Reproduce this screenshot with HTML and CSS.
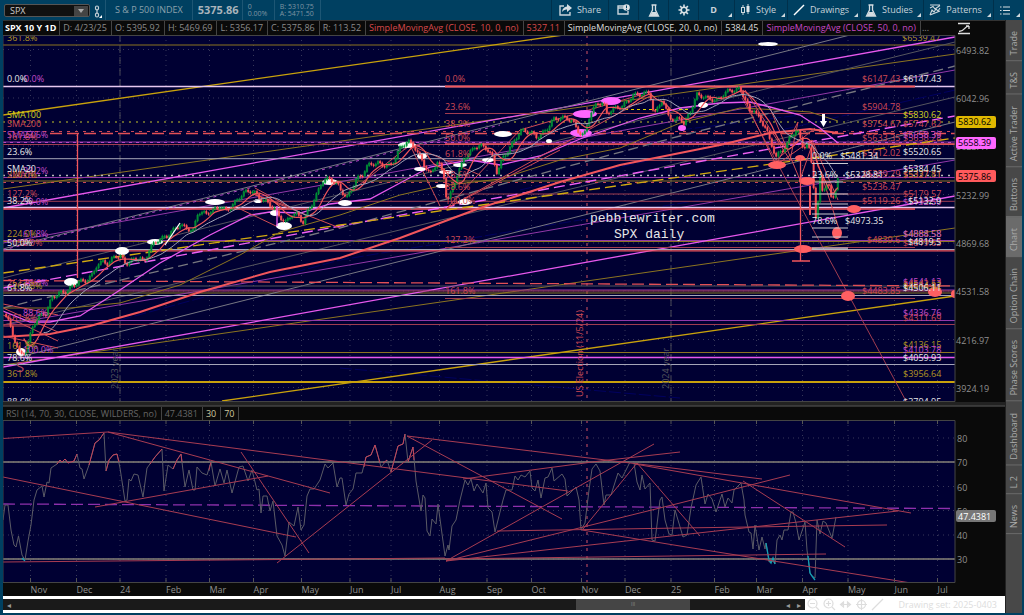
FILE: index.html
```html
<!DOCTYPE html>
<html lang="en">
<head>
<meta charset="utf-8">
<title>SPX daily chart</title>
<link rel="stylesheet" href="styles.css">
</head>
<body>
<div class="app">
  <header class="toolbar">
    <div class="symbol">
      <input class="symbol-input" type="text" value="SPX" aria-label="Symbol">
      <button class="symbol-drop" aria-label="Recent symbols"><svg width="6" height="4" viewBox="0 0 6 4"><path d="M0 0H6L3 4Z" fill="#aaa"/></svg></button>
    </div>
    <button class="link-btn" aria-label="Link symbol"><svg width="9" height="14" viewBox="0 0 9 14"><g fill="none" stroke="#c3ced6" stroke-width="1.2"><rect x="1.5" y="1" width="3" height="4" rx="1.5"/><rect x="1.5" y="8" width="3" height="4" rx="1.5"/><path d="M3 4V9"/></g><path d="M8 10V13H5Z" fill="#fff"/></svg></button>
    <div class="quote name">S &amp; P 500 INDEX</div>
    <div class="quote last">5375.86</div>
    <div class="quote pair"><span>0</span><span>0.00%</span></div>
    <div class="quote pair ba"><span>B: 5310.75</span><span>A: 5471.50</span></div>
    <nav class="tools">
      <button><svg width="13" height="12" viewBox="0 0 13 12"><path d="M5 2H1V11H11V8" fill="none" stroke="#c9d3da" stroke-width="1.4"/><path d="M8 0L13 4L8 8V5.500Q5 5 3 8Q3.500 3 8 2.500Z" fill="#d5dde2"/></svg>Share</button>
      <button aria-label="Alerts"><svg width="13" height="12" viewBox="0 0 13 12"><path d="M7 2H1V10H11V7M1 4H7" fill="none" stroke="#c9d3da" stroke-width="1.4"/><circle cx="9.500" cy="3.500" r="3.300" fill="#dbe2e6"/><path d="M9.500 1.500V4M9.500 4.800V5.800" stroke="#004061"/></svg></button>
      <button aria-label="Studies menu"><svg width="12" height="13" viewBox="0 0 12 13"><path d="M3.500 1H8.500M4.500 1V6L1.500 12H10.500L7.500 6V1" fill="none" stroke="#d5dde2" stroke-width="1.300"/><path d="M4 8H8L10 12H2Z" fill="#d5dde2"/></svg></button>
      <button aria-label="Settings"><svg width="12" height="12" viewBox="0 0 12 12"><circle cx="6" cy="6" r="2.800" fill="none" stroke="#dbe2e6" stroke-width="1.600"/><path d="M6 .5V3M6 9V11.500M.5 6H3M9 6H11.500M2.100 2.100L3.800 3.800M8.200 8.200L9.900 9.900M9.900 2.100L8.200 3.800M3.800 8.200L2.100 9.900" stroke="#dbe2e6" stroke-width="1.600"/></svg></button>
      <button class="more"><b>D</b></button>
      <button class="more"><svg width="11" height="12" viewBox="0 0 11 12"><path d="M3 1V11M8 0V10" stroke="#cfd8dd"/><rect x="1.500" y="3.500" width="3" height="5" fill="#004061" stroke="#cfd8dd"/><rect x="6.500" y="2" width="3" height="6" fill="#dfe5e9"/></svg>Style</button>
      <button class="more"><svg width="12" height="12" viewBox="0 0 12 12"><path d="M1 11L11 1" stroke="#fff" stroke-width="1.500"/></svg>Drawings</button>
      <button class="more"><svg width="12" height="13" viewBox="0 0 12 13"><path d="M3.500 1H8.500M4.500 1V6L1.500 12H10.500L7.500 6V1" fill="none" stroke="#d5dde2" stroke-width="1.300"/><path d="M4 8H8L10 12H2Z" fill="#d5dde2"/></svg>Studies</button>
      <button class="more"><svg width="12" height="12" viewBox="0 0 12 12"><path d="M1 1H11M1 4L4 2.500L6 5L11 1.500M1 11L3 6L5 8L7 5L9 7L11 4M1 11L11 7" fill="none" stroke="#cfd8dd" stroke-width="1.100"/></svg>Patterns</button>
      <button class="more" aria-label="Menu"><svg width="10" height="9" viewBox="0 0 10 9"><path d="M0 1H1.500M3 1H10M0 4.500H1.500M3 4.500H10M0 8H1.500M3 8H10" stroke="#d5dde2" stroke-width="1.200"/></svg></button>
    </nav>
  </header>
  <div class="body">
    <main class="charts">
      <div class="legend">
        <span class="head">SPX 10 Y 1D</span><span>D: 4/23/25</span><span>O: 5395.92</span><span>H: 5469.69</span><span>L: 5356.17</span><span>C: 5375.86</span><span>R: 113.52</span><span class="red-text">SimpleMovingAvg (CLOSE, 10, 0, no)</span><span class="red-text">5327.11</span><span class="white-text">SimpleMovingAvg (CLOSE, 20, 0, no)</span><span class="white-text">5384.45</span><span class="mag-text">SimpleMovingAvg (CLOSE, 50, 0, no)</span><span class="rest">...</span>
        <button class="scale" aria-label="Auto scale"><svg width="14" height="13" viewBox="0 0 14 13"><path d="M1 1.500H13M1 11.500H13M2 9.500C8 9.500 7 4 12 4M12 4H9M12 4V7" fill="none" stroke="#ddd" stroke-width="1.300"/></svg></button>
      </div>
      <svg class="plot" viewBox="3 35 1002 367" role="img" aria-label="SPX daily price chart">
        <defs><clipPath id="area"><rect x="3" y="35" width="952" height="366"/></clipPath></defs>
        <rect x="3" y="35" width="952" height="366" class="navy"/>
        <g clip-path="url(#area)">
          <g id="grid"></g>
          <path class="year" d="M120 35V401M671 35V401"/>
          <path class="elect" d="M587 35V401"/>
          <g fill="none">
            <path class="blueline" d="M120 320L340 260L700 200M340 368L680 398M520 190L955 90M680 130L800 115"/>
            <path class="golddim" d="M3 45H955M3 181H955M3 241.500H955M3 293H955M3 352.500H955M3 189L955 54M3 365L955 228"/>
            <path class="gold" d="M3 115L563 35M222 401L955 296"/>
            <path class="gold thick" d="M3 382H955"/>
            <path class="olive-dot" d="M3 122H955"/>
            <path class="violet" d="M3 142H955M3 177.500H955M3 290H955M3 320.500H955M3 243L955 70M3 325L955 160M3 240.500H955"/>
            <path class="magenta" d="M3 357.500H955M3 208L955 37M3 367L955 196"/>
            <path class="grey" d="M3 249L850 35M15 358L640 201L955 122"/>
            <path class="greydim" d="M3 278L955 42M3 325L955 97M3 286H955"/>
            <path class="reddim" d="M3 144.500H955M3 201.300H955M3 291H955M3 324.500H955M445 113.500H915M445 160.500H915M445 194H915M445 247.500H915M445 298.500H915M742 98L906 401"/>
            <path class="white" d="M3 158.700H955M3 364.500H955M3 249.500H955M3 295.500H955"/>
            <path class="pinkwhite" d="M3 86.500H955M3 207.500H955"/>
            <path class="red" d="M3 209H915M3 250.800H955M445 144H955M77.500 133V278"/>
            <path class="red thick" d="M445 86.500H915"/>
            <path class="reddash" d="M3 131.500H955M3 182.500H955"/>
            <path class="redlong" d="M50 133.500H955M3 280.500L955 286"/>
            <path class="magdot" d="M3 142.500H955M3 250L500 125"/>
            <path class="whitedot" d="M3 175.500H955"/>
            <path class="yeldot" d="M625 109.500H690"/>
            <path class="greylong" d="M3 308L340 228L680 136L955 66"/>
            <path class="maglong" d="M3 288L340 226L680 165L955 116"/>
            <path class="goldlong" d="M3 273L340 225L680 177L955 138"/>
            <path class="golddim" d="M3 308L70 308L120 303L180 285L240 255L280 232L340 215L400 195L440 186L500 179L560 160L620 148L680 123L740 108L780 110L810 112L838 121"/>
            <path class="red sma" d="M3 337L50 334L90 326L140 312L200 292L270 272L340 258L400 238L480 208L560 182L620 165L680 153L720 145L770 133L810 129L838 133"/>
            <path class="magenta wide" d="M3 311L30 322L50 322L80 316L120 290L160 263L210 235L250 215L270 212L300 213L330 204L370 199L400 183L430 167L470 160L500 165L540 156L580 139L640 118L680 108L720 103L750 102L770 107L800 115L820 128L838 143"/>
            <path class="reddim strong" d="M3 304L58 315M3 308L58 332M3 315L58 341M3 326H30M3 336L58 348M447 208L520 130L640 95M447 208L650 96M447 208L560 150M340 200L410 145L440 206M410 145L480 175M255 188L290 207L253 194L340 228M238 208L276 226M740 90L776 165L812 140L838 200M770 108L800 180L812 145L840 232M745 90L790 160L798 122L776 165M776 160L815 128"/>
          </g>
          <g fill="#fff">
            <ellipse cx="768" cy="44" rx="10" ry="2"/><ellipse cx="703" cy="105" rx="5" ry="3"/><ellipse cx="407" cy="145" rx="9" ry="3"/><ellipse cx="422" cy="156" rx="5" ry="3"/><ellipse cx="420" cy="169" rx="6" ry="2"/><ellipse cx="446" cy="172" rx="7" ry="2"/><ellipse cx="442" cy="186" rx="6" ry="2"/><ellipse cx="460" cy="165" rx="7" ry="2"/><ellipse cx="465" cy="202" rx="7" ry="3"/><ellipse cx="488" cy="160" rx="6" ry="2"/><ellipse cx="503" cy="134" rx="9" ry="3"/><ellipse cx="549" cy="141" rx="3" ry="2"/><ellipse cx="215" cy="202" rx="10" ry="3"/><ellipse cx="258" cy="201" rx="4" ry="2"/><ellipse cx="275" cy="213" rx="5" ry="3"/><ellipse cx="284" cy="226" rx="8" ry="4"/><ellipse cx="330" cy="182" rx="8" ry="3"/><ellipse cx="345" cy="203" rx="7" ry="3"/><ellipse cx="155" cy="242" rx="8" ry="3"/><ellipse cx="122" cy="251" rx="7" ry="4"/><ellipse cx="71" cy="282" rx="7" ry="4"/><ellipse cx="21" cy="352" rx="5" ry="4"/>
          </g>
          <g fill="#ff66ff"><ellipse cx="611" cy="101" rx="10" ry="4"/><ellipse cx="585" cy="114" rx="12" ry="4"/><ellipse cx="581" cy="133" rx="11" ry="4"/><ellipse cx="682" cy="128" rx="4" ry="3"/></g>
          <g id="candles"></g>
          <path class="candleline" d="M165 245L180 223"/>
          <path class="magenta wide" d="M277 206V226"/>
          <g fill="#ff5f62"><ellipse cx="777" cy="165" rx="9" ry="4"/><ellipse cx="807" cy="181" rx="8" ry="4"/><ellipse cx="800" cy="158" rx="5" ry="3"/><ellipse cx="854" cy="209" rx="7" ry="4"/><ellipse cx="837" cy="233" rx="5" ry="6"/><ellipse cx="803" cy="249" rx="9" ry="4"/><ellipse cx="848" cy="296" rx="7" ry="5"/><ellipse cx="935" cy="292" rx="7" ry="5"/><ellipse cx="955" cy="294" rx="4" ry="4"/></g>
          <path class="red" d="M800.500 157V261M792 261H810"/>
          <path class="red thick" d="M810 186V215"/>
          <path class="fib" d="M812 163.500H848M815 182H843M812 194H848M812 204H848M812 214H848M812 228H848M812 237H848M812 248H848M812 249H848"/>
          <path d="M822 114H825V121H827L823.500 127L820 121H822Z" fill="#fff"/>
          <g id="labels"></g>
          <text x="590" y="222" class="mono">pebblewriter.com</text>
          <text x="614" y="238" class="mono">SPX daily</text>
          <text class="lbl c-r" transform="translate(583 397) rotate(-90)">US Election (11/5/24)</text>
          <text class="lbl c-d" transform="translate(118 389) rotate(-90)">2023 year</text>
          <text class="lbl c-d" transform="translate(669 389) rotate(-90)">2024 year</text>
          <text x="16" y="372" class="scribble">S</text>
        </g>
        <path class="frame" d="M3 35.500H955V401.500H3Z"/>
        <g class="axis" id="price-axis"></g>
        <g class="tag"><rect x="956" y="116" width="40" height="12" rx="2" fill="#e0b800"/><text x="958" y="125">5830.62</text><rect x="956" y="137" width="40" height="12" rx="2" fill="#ff66ff"/><text x="958" y="146">5658.39</text><rect x="956" y="170" width="40" height="12" rx="2" fill="#ff5a5c"/><text x="958" y="180">5375.86</text></g>
      </svg>
      <div class="splitter"></div>
      <div class="legend rsi"><span>RSI (14, 70, 30, CLOSE, WILDERS, no)</span><span>47.4381</span><span class="cream">30</span><span class="cream">70</span></div>
      <svg class="plot" viewBox="3 420 1002 176" role="img" aria-label="RSI chart">
        <defs><clipPath id="rsi-area"><rect x="3" y="420" width="952" height="162"/></clipPath></defs>
        <rect x="3" y="420" width="952" height="162" class="navy"/>
        <g clip-path="url(#rsi-area)" fill="none">
          <g id="rsi-grid"></g>
          <path class="elect" d="M587 420V582"/>
          <path class="bound" d="M3 462H955M3 559H955"/>
          <path class="violetlong" d="M3 504L955 508.500"/>
          <path class="rsi-line" d="M3 520L5 505L8 505L11 530L14 545L16 547L18.500 536L22 555L25 560L28 541L31 525L34 500L37 490L42 486L44 497L47 482L49 483L51 468L57 464L60 460L62 462L65 459L68 463L74 461L77 454L80 468L82 469L84 479L89 465L95 443L99 440L104 433L106 471L109 460L113 455L117 454L120 468L125 501L127 500L129 479L131 481L134 474L138 475L143 497L147 468L155 457L162 449L164 491L168 465L173 469L177 460L181 454L185 487L189 470L193 490L195 490L197 467L202 473L207 475L211 462L215 486L220 469L224 483L227 470L232 493L239 467L243 466L248 481L252 470L257 490L259 489L261 513L263 496L267 496L270 511L273 501L277 536L282 545L285 556L289 522L294 526L298 507L301 530L304 525L307 496L310 489L314 489L320 480L325 464L328 468L333 463L337 487L340 478L342 478L346 505L349 494L353 489L356 473L362 473L366 457L371 455L375 445L381 467L387 460L391 472L398 446L403 444L405 434L408 462L413 447L416 481L421 511L423 495L425 498L427 531L430 536L432 519L436 524L438 504L445 556L448 545L449 550L452 526L456 520L460 500L465 480L468 485L471 479L474 491L477 484L483 493L486 483L488 508L492 512L495 532L503 500L506 490L512 490L515 476L518 480L521 475L525 477L530 471L532 488L535 491L538 480L541 498L545 478L548 477L552 468L554 481L562 474L565 479L567 496L576 487L579 500L581 530L585 523L589 490L592 469L596 464L600 471L604 505L606 495L611 495L618 473L622 478L630 462L634 463L637 482L640 490L642 475L645 489L650 483L652 540L655 541L660 500L662 497L665 520L669 534L672 535L675 510L678 520L683 537L687 535L691 508L696 485L701 477L705 504L708 494L712 499L716 512L722 494L725 507L728 498L732 503L734 490L741 483L744 500L745 515L749 532L751 533L753 549L755 525L759 550L762 537L765 549L766 543L769 562L773 561L775 564L777 540L780 535L782 540L784 530L788 530L791 512L793 512L796 523L799 540L805 522L807 550L810 573L812 576L815 578L817 520L820 534L823 521L826 523L832 538L836 517"/>
          <path class="over" d="M57 464L60 460L62 462L65 459L68 463L74 461L77 454M89 465L95 443L99 440L104 433M106 471L109 460L113 455L117 454L119 462M150 464L155 457L162 449M173 469L177 460L181 454L182 462M211 462L209 470M364 467L366 457L371 455L375 445L380 463M383 463L387 460M391 472L398 446L403 444L405 434M408 462L413 447L414 460"/>
          <path class="under" d="M766 543L769 560L771 563L773 558L775 564M808 556L810 573L812 576L815 580M22 558L25 561"/>
          <path class="trend" d="M3 438.500L108 432L568 491M108 432L330 493M3 477L296 537M95 507L268 476M241 452L309 553M277 563L432 440M3 562L445 558L446 559L826 554M407 436L562 519M407 436L680 469L762 479M635 464L911 513M463 479L600 461L680 452M446 561L654 444M446 561L680 503L790 475M446 561L680 535L898 511M497 531L680 528L887 525M582 530L680 546L911 583M583 529L637 463L700 536M743 481L845 547"/>
        </g>
        <path class="frame" d="M3 420.500H955V582.500H3Z"/>
        <g class="axis" id="rsi-axis"></g>
        <g class="tag"><rect x="956" y="510" width="40" height="12" rx="2" fill="#777"/><text x="958" y="520" fill="#fff">47.4381</text></g>
      </svg>
      <footer class="status">
        <div class="track"><button class="arrow" aria-label="Scroll to start">◂</button><div class="thumb">III</div><button class="arrow" aria-label="Scroll left">◂</button><button class="arrow" aria-label="Scroll right">▸</button></div>
        <div class="zoomers">
          <button aria-label="Zoom out"><svg width="13" height="13" viewBox="0 0 13 13"><circle cx="5.500" cy="5.500" r="4.500"/><path d="M3 5.500H8M9 9L12 12"/></svg></button>
          <button aria-label="Zoom in"><svg width="13" height="13" viewBox="0 0 13 13"><circle cx="5.500" cy="5.500" r="4.500"/><path d="M3 5.500H8M5.500 3V8M9 9L12 12"/></svg></button>
          <button aria-label="Pan"><svg width="13" height="13" viewBox="0 0 13 13"><path d="M2 6.500H11M4.500 4L1.500 6.500L4.500 9ZM8.500 4L11.500 6.500L8.500 9Z"/></svg></button>
          <button aria-label="Crosshair"><svg width="13" height="13" viewBox="0 0 13 13"><circle cx="6.500" cy="6.500" r="4"/><path d="M6.500 1V12M1 6.500H12"/></svg></button>
          <button aria-label="Draw line"><svg width="13" height="13" viewBox="0 0 13 13"><path d="M1 12L12 1"/></svg></button>
        </div>
        <button class="set">Drawing set: 2025-0403</button>
      </footer>
    </main>
    <aside class="tabs">
      <button>Trade</button><button>T&amp;S</button><button>Active Trader</button><button>Buttons</button><button class="on">Chart</button><button>Option Chain</button><button>Phase Scores</button><button>Dashboard</button><button>L 2</button><button>News</button>
    </aside>
  </div>
</div>
<script src="chart.js"></script>
</body>
</html>
```
FILE: styles.css
```css
* { box-sizing: border-box; }
body {
  margin: 0;
  background: #004061;
  font-family: "Open Sans", "Noto Sans", sans-serif;
  font-size: 9px;
  line-height: 12px;
  color: #8a8a8a;
}
button, input { font: inherit; color: inherit; border: 0; background: none; padding: 0; margin: 0; }
svg { display: block; }
.app { min-height: 100vh; padding: 0 2px 2px 3px; display: flex; flex-direction: column; }

.toolbar { display: flex; align-items: stretch; height: 20px; color: #9fb0bb; white-space: nowrap; }
.symbol { display: flex; align-items: center; width: 86px; margin: 4px 0 3px 1px; background: #101010; border: 1px solid #555; border-radius: 2px; }
.symbol-input { flex: 1; min-width: 0; padding-left: 5px; color: #ccc; }
.symbol-drop { display: grid; place-items: center; width: 14px; height: 10px; background: #444; margin-right: 1px; }
.link-btn { width: 15px; padding: 3px 0 0 4px; }
.quote { display: flex; align-items: center; border-left: 1px solid #1d5674; padding-left: 5px; }
.name { padding: 0 9px; color: #8ca0ac; }
.last { font-size: 11px; font-weight: 700; width: 50px; color: #a9b4bb; }
.pair { flex-direction: column; align-items: flex-start; justify-content: center; width: 32px; font-size: 7px; line-height: 7px; color: #7f95a2; }
.ba { width: 47px; border-right: 1px solid #1d5674; }
.tools { display: grid; grid-template-columns: 57px 30px 30px 30px 36px 53px 73px 63px 70px 29px; margin-left: auto; color: #c9d3da; }
.tools button { position: relative; display: flex; align-items: center; justify-content: center; gap: 5px; border-left: 1px solid #00304b; }
.tools .more { padding-right: 6px; }
.more::after { content: ""; position: absolute; right: 2px; bottom: 3px; border: solid transparent; border-width: 4px 0 0 4px; border-right: 0; border-bottom: 4px solid #cfd8dd; border-top: 0; }

.body { display: flex; flex: 1; }
.charts { flex: 1; min-width: 0; background: #0a0a0a; display: flex; flex-direction: column; }
.legend { display: flex; align-items: center; height: 15px; white-space: nowrap; border-top: 1px solid #333; }
.legend span { padding: 0 4px 0 3px; border-right: 1px solid #444; line-height: 14px; }
.legend .head { color: #fff; font-weight: 700; padding-left: 2px; padding-right: 3px; }
.red-text { color: #d8494b; }
.white-text { color: #ddd; }
.mag-text { color: #c648c6; }
.cream { color: #cfc9a0; }
.legend .rest { border: 0; padding: 0 1px; }
.scale { margin: 0 34px 0 auto; }
.splitter { height: 4px; background: #222; border-bottom: 1px solid #3a3a3a; }
.rsi { height: 14px; color: #666; }
.plot { width: 100%; height: auto; }

.navy { fill: #000033; }
.frame { fill: none; stroke: #444; }
.grid-line { stroke: #50506a; stroke-dasharray: 1 4; fill: none; opacity: .7; }
.year { stroke: #4a4a58; stroke-dasharray: 7 4; }
.elect { stroke: #a0405a; stroke-dasharray: 3 5; stroke-width: 1.3; }
.blueline { stroke: #000060; stroke-dasharray: 12 3; }
.golddim { stroke: #8c7420; }
.gold { stroke: #c9a20c; stroke-width: 1.3; }
.thick { stroke-width: 2; }
.wide { stroke-width: 1.6; }
.olive-dot { stroke: #82822e; stroke-width: 1.5; stroke-dasharray: 2 5; }
.violet { stroke: #9238a8; }
.magenta { stroke: #e858ee; stroke-width: 1.3; }
.grey { stroke: #777783; }
.greydim { stroke: #55555f; }
.reddim { stroke: #a03c50; }
.strong { stroke: #d04c54; }
.white { stroke: #a5a5b8; }
.pinkwhite { stroke: #e6c8f0; stroke-width: 1.6; }
.red { stroke: #f2565c; fill: none; stroke-width: 1.3; }
.red.thick { stroke-width: 2; }
.red.sma { stroke-width: 2; }
.reddash { stroke: #c84858; stroke-dasharray: 3 5; }
.redlong { stroke: #e24f55; stroke-width: 1.3; stroke-dasharray: 12 5; }
.magdot { stroke: #b648c6; stroke-dasharray: 3 4; }
.whitedot { stroke: #b8b8b8; stroke-dasharray: 2 5; stroke-width: 1.3; }
.yeldot { stroke: #e0d000; stroke-dasharray: 3 3; }
.greylong { stroke: #77777f; stroke-dasharray: 10 5; stroke-width: 1.3; }
.maglong { stroke: #f060f4; stroke-dasharray: 11 5; stroke-width: 1.4; }
.goldlong { stroke: #d2aa10; stroke-dasharray: 11 5; stroke-width: 1.4; }
.candleline { stroke: #fff; stroke-width: 1.3; }
.fib { stroke: #c8c8d0; stroke-width: 1; fill: none; }
.up { stroke: #00a838; fill: #001a30; }
.down { stroke: #ff5558; fill: #ff5558; }
.sma10 { stroke: #f0565a; stroke-width: 1.2; fill: none; }
.sma20 { stroke: #a4a4b8; fill: none; }
.lbl { font-size: 9px; }
.mono { font-family: "Liberation Mono", monospace; font-size: 13px; fill: #e8e8e8; }
.scribble { font-size: 15px; fill: #b84a60; }
.c-w { fill: #e8e8e8; }
.c-m { fill: #c44ccc; }
.c-r { fill: #d04a54; }
.c-g { fill: #b39522; }
.c-y { fill: #d2d21e; }
.c-d { fill: #55555c; }
.axis text { font-size: 9px; fill: #909090; }
.axis path { stroke: #555; }
.tag text { font-size: 9px; }
.bound { stroke: #858178; stroke-width: 1.3; }
.violetlong { stroke: #8e30ac; stroke-width: 1.3; stroke-dasharray: 12 5; }
.rsi-line { stroke: #5b5b66; }
.over { stroke: #c2445a; }
.under { stroke: #12a0b4; stroke-width: 1.3; }
.trend { stroke: #a83c52; }

.status { display: flex; align-items: center; flex: 1; min-height: 17px; background: #fff; color: #ddd; }
.track { display: flex; align-items: center; flex: 0 0 80%; height: 11px; background: #1a1a1a; }
.arrow { width: 11px; font-size: 8px; line-height: 10px; color: #999; }
.thumb { width: 114px; height: 11px; margin: 0 auto 0 calc(72% - 15px); background: #454545; color: #888; font-size: 5px; line-height: 11px; text-align: center; }
.zoomers { display: flex; gap: 3px; padding-left: 2px; }
.zoomers svg { fill: none; stroke: #ddd; stroke-width: 1.2; }
.set { margin-left: auto; margin-right: 8px; }

.tabs { width: 17px; background: #484848; border-left: 1px solid #222; display: flex; flex-direction: column; }
.tabs button { writing-mode: vertical-rl; transform: rotate(180deg); padding: 5px 0 11px; color: #aaa; border-top: 1px solid #6a6a6a; line-height: 16px; white-space: nowrap; }
.tabs .on { background: #6b6b6b; }
```
FILE: chart.js
```js
const NS = "http://www.w3.org/2000/svg";
function add(parent, tag, attrs, text) {
  const el = document.createElementNS(NS, tag);
  for (const key in attrs) el.setAttribute(key, attrs[key]);
  if (text) el.textContent = text;
  document.getElementById(parent).appendChild(el);
}

const months = [["Nov", 30.5], ["Dec", 76.5], ["24", 120], ["Feb", 166], ["Mar", 209.5], ["Apr", 253.5], ["May", 301.5], ["Jun", 350], ["Jul", 391], ["Aug", 439.5], ["Sep", 487], ["Oct", 531.5], ["Nov", 581.5], ["Dec", 625], ["25", 671], ["Feb", 714.5], ["Mar", 756.5], ["Apr", 802.5], ["May", 848], ["Jun", 894.5], ["Jul", 937.5]];
const prices = [["6493.82", 49.5], ["6042.96", 98], ["5623.41", 146], ["5232.99", 194.5], ["4869.68", 243], ["4531.58", 291], ["4216.97", 339.5], ["3924.19", 387.5]];
const levels = [["80", 438], ["70", 462], ["60", 486.5], ["50", 510.5], ["40", 535], ["30", 559]];

for (const [name, x] of months) {
  add("grid", "path", { class: "grid-line", d: `M${x} 35V401` });
  add("rsi-grid", "path", { class: "grid-line", d: `M${x} 420V582` });
  add("rsi-axis", "path", { d: `M${x} 420V424M${x} 578V582` });
  add("rsi-axis", "text", { x, y: 593 }, name);
}
for (const [name, y] of prices) {
  add("grid", "path", { class: "grid-line", d: `M3 ${y}H955` });
  add("price-axis", "text", { x: 956, y: y + 4 }, name);
}
for (const [name, y] of levels) {
  add("rsi-grid", "path", { class: "grid-line", d: `M3 ${y}H955` });
  add("rsi-axis", "text", { x: 957, y: y + 4 }, name);
}

// Closing levels along the time axis; candles are interpolated between them.
const keys = [4,315, 8,322, 13,335, 20,352, 26,348, 33,325, 40,318, 46,316, 52,298, 60,290, 68,288, 78,284, 86,284, 92,276, 97,263, 104,258, 108,262, 115,256, 121,260, 126,267, 133,260, 140,255, 144,260, 150,246, 158,242, 166,240, 172,232, 180,222, 188,226, 193,231, 198,214, 206,217, 214,210, 220,203, 226,208, 235,203, 245,195, 253,192, 262,197, 268,200, 274,208, 278,216, 285,226, 292,216, 298,213, 303,220, 308,208, 316,197, 322,184, 330,181, 338,184, 347,195, 356,180, 362,178, 368,168, 378,162, 392,163, 400,150, 408,144, 415,148, 422,158, 430,172, 438,162, 444,180, 447,205, 451,195, 457,175, 464,155, 475,146, 485,150, 492,158, 497,172, 503,155, 510,145, 520,133, 530,135, 537,137, 545,128, 553,118, 562,120, 572,123, 580,132, 584,133, 590,112, 597,103, 604,107, 607,117, 614,110, 622,104, 633,93, 640,96, 650,96, 654,117, 662,97, 668,112, 675,120, 680,118, 684,127, 690,115, 697,95, 704,94, 710,96, 718,100, 726,95, 734,92, 740,88, 745,95, 750,110, 754,107, 760,122, 766,130, 770,145, 776,157, 783,148, 790,135, 797,128, 803,150, 808,145, 812,170, 815,205, 817,235, 819,170, 822,190, 828,178, 832,200, 836,185, 838,177];
const closes = [];
let k = 0;
for (let x = 4; x <= 838; x += 2.2) {
  while (keys[k + 2] < x) k += 2;
  const t = (x - keys[k]) / (keys[k + 2] - keys[k]);
  const y = keys[k + 1] + t * (keys[k + 3] - keys[k + 1]);
  closes.push([x, y + Math.sin(x * 2.7) * 3 + Math.sin(x * 5.1) * 2]);
}
for (let i = 1; i < closes.length; i++) {
  const [x, close] = closes[i];
  const open = closes[i - 1][1];
  const top = Math.min(open, close), tall = Math.max(1, Math.abs(open - close));
  const kind = close < open ? "up" : "down";
  add("candles", "path", { class: kind, "stroke-width": 0.7, d: `M${x} ${top - 1.5}V${top + tall + 1.5}M${x - 0.6} ${top}h1.2v${tall}h-1.2z` });
}
function average(n, cls) {
  let d = "";
  for (let i = n; i < closes.length; i++) {
    let sum = 0;
    for (let j = 0; j < n; j++) sum += closes[i - j][1];
    d += (d ? "L" : "M") + closes[i][0] + " " + sum / n;
  }
  add("candles", "path", { class: cls, d });
}
average(9, "sma10");
average(18, "sma20");

// colour, x, baseline, text
const labels = `g 7 41 361.8%|m 24 82 0.0%|w 7 82 0.0%|y 7 118 SMA100|r 7 127 SMA200|m 7 138 SMA50|m 23 138 23.6%|r 7 140 161.8%|w 7 155 23.6%|m 23 174 38.2%|g 7 178 224.0%|r 7 178 SMA10|w 7 172 SMA20|r 7 197 127.2%|m 23 205 50.0%|w 7 204 38.2%|g 7 237 224.0%|m 23 237 61.8%|r 12 246 150.0%|w 7 246 50.0%|r 7 286 261.8%|m 23 286 78.6%|g 12 289 261.8%|w 7 291 61.8%|m 23 316 88.6%|r 7 321 161.8%|g 7 349 161.8%|m 23 353 100.0%|w 7 361 78.6%|g 7 377 361.8%|w 7 405 88.6%
r 445 82 0.0%|r 445 110 23.6%|r 445 127 38.2%|r 445 141 50.0%|r 445 157 61.8%|r 445 178 78.6%|r 445 190 88.6%|r 445 204 100.0%|r 445 243 127.2%|r 445 294 161.8%
g 902 41 $6539.47|r 862 82 $6147.43|w 903 82 $6147.43|r 862 110 $5904.78|y 903 118 $5830.62|r 862 127 $5754.67|r 903 127 $5747.62|r 862 141 $5633.35|r 903 141 $5638.28|m 903 138 $5658.39|w 903 155 $5520.65|r 862 156 $5512.02|r 862 177 $5359.29|g 903 177 $5337.81|r 903 178 $5327.11|w 903 172 $5384.45|r 862 190 $5236.47|r 903 197 $5179.57|r 862 204 $5119.26|m 903 205 $5132.50|w 908 204 $5132.9|g 903 237 $4884.58|m 903 237 $4888.58|r 867 243 $4839.6|r 903 246 $4819.63|w 908 245 $4819.5|m 903 285 $4541.13|r 903 287 $4543.52|g 903 289 $4514.82|w 903 291 $4506.11|r 862 294 $4483.85|m 903 316 $4336.76|r 903 321 $4311.69|g 903 348 $4136.15|m 903 353 $4103.78|w 903 361 $4059.93|g 903 377 $3956.64|w 903 405 $3794.95
w 812 159 0.0%|w 840 159 $5481.34|w 812 178 23.6%|w 845 178 $5328.81|w 812 224 78.6%|w 845 224 $4973.35`;
for (const item of labels.split(/[|\n]/)) {
  const [color, x, y, text] = item.split(" ");
  add("labels", "text", { class: `lbl c-${color}`, x, y }, text);
}
```
